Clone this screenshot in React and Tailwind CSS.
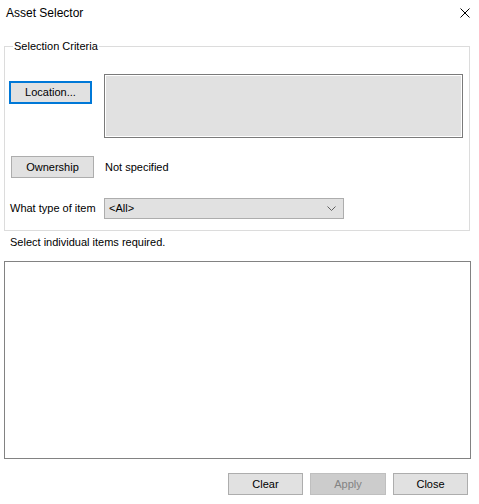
import React from "react";

const font = { fontFamily: '"Liberation Sans", Arial, sans-serif' };

const Btn = ({ children, className = "", disabled = false, focused = false }) => (
  <button
    disabled={disabled}
    className={`flex items-center justify-center text-[11px] leading-none ${
      disabled
        ? "bg-[#cccccc] border border-[#bfbfbf] text-[#838383]"
        : focused
        ? "bg-[#e1e1e1] border-2 border-[#0078d7] text-black"
        : "bg-[#e1e1e1] border border-[#adadad] text-black"
    } ${className}`}
  >
    {children}
  </button>
);

export default function App() {
  return (
    <div className="w-[479px] h-[504px] bg-white flex flex-col text-black" style={font}>
      {/* Title bar */}
      <div className="h-[26px] flex items-center justify-between pl-[6px] pr-[9px]">
        <span className="text-[12px]">Asset Selector</span>
        <svg width="10" height="10" viewBox="0 0 10 10">
          <path d="M0.5 0.5L9.5 9.5M9.5 0.5L0.5 9.5" stroke="#000" strokeWidth="1" />
        </svg>
      </div>

      {/* Selection criteria group */}
      <fieldset className="ml-[4px] mt-[14px] w-[466px] border border-[#dcdcdc] pb-[11px]">
        <legend className="ml-[8px] px-[1px] text-[11px] leading-[13px]">Selection Criteria</legend>

        <div className="flex items-start mt-[21px]">
          <Btn focused className="ml-[4px] mt-[7px] w-[83px] h-[23px]">Location...</Btn>
          <div className="ml-[12px] w-[359px] h-[64px] border border-[#7a7a7a] p-px bg-white">
            <div className="w-full h-full bg-[#e1e1e1]" />
          </div>
        </div>

        <div className="flex items-center mt-[18px]">
          <Btn className="ml-[6px] w-[83px] h-[22px]">Ownership</Btn>
          <span className="ml-[11px] text-[11px]">Not specified</span>
        </div>

        <div className="flex items-center mt-[20px]">
          <span className="ml-[5px] w-[94px] text-[11px]">What type of item</span>
          <div className="w-[240px] h-[21px] bg-[#e1e1e1] border border-[#adadad] flex items-center justify-between pl-[4px] pr-[7px]">
            <span className="text-[11px]">&lt;All&gt;</span>
            <svg width="9" height="5" viewBox="0 0 9 5">
              <path d="M0.5 0.5L4.5 4.5L8.5 0.5" fill="none" stroke="#606060" strokeWidth="1" />
            </svg>
          </div>
        </div>
      </fieldset>

      <div className="mt-[5px] pl-[10px] text-[11px] leading-[13px]">Select individual items required.</div>

      {/* Item list */}
      <div className="ml-[4px] mt-[12px] w-[467px] h-[198px] border border-[#828282] bg-white" />

      {/* Dialog buttons */}
      <div className="flex justify-end gap-[7px] pr-[11px] mt-[14px]">
        <Btn className="w-[75px] h-[22px]">Clear</Btn>
        <Btn disabled className="w-[76px] h-[22px]">Apply</Btn>
        <Btn className="w-[75px] h-[22px]">Close</Btn>
      </div>
    </div>
  );
}
